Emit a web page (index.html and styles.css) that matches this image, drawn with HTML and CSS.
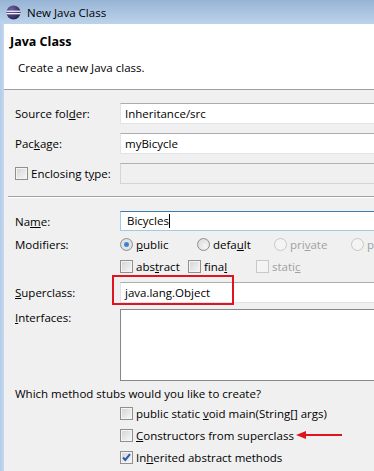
FILE: index.html
```html
<!DOCTYPE html>
<html lang="en">
  <head>
    <meta charset="UTF-8" />
    <title>New Java Class</title>
    <link rel="stylesheet" href="styles.css">
  </head>
  <body>
    <div class="titlebar">
      <svg class="app-icon" width="15" height="15" viewBox="0 0 16 16">
        <defs>
          <radialGradient id="sphere" cx="0.35" cy="0.3" r="0.8">
            <stop offset="0" stop-color="#6d63a8" />
            <stop offset="1" stop-color="#231d4f" />
          </radialGradient>
        </defs>
        <circle cx="8" cy="8" r="7.5" fill="url(#sphere)" />
        <rect x="0.5" y="6" width="15" height="1.3" fill="#fff" />
        <rect x="0.5" y="8.6" width="15" height="1.3" fill="#fff" />
      </svg>
      <span>New Java Class</span>
    </div>

    <div class="window">
      <div class="frame"></div>
      <div class="dialog">
        <div class="banner">
          <div class="banner-title">Java Class</div>
          <div class="banner-desc">Create a new Java class.</div>
        </div>

        <div class="body">
          <div class="row">
            <div class="lbl">Source fol<u>d</u>er:</div>
            <div class="text">Inheritance/src</div>
          </div>
          <div class="row">
            <div class="lbl">Pac<u>k</u>age:</div>
            <div class="text">myBicycle</div>
          </div>
          <div class="row">
            <div class="lbl check-lbl"><span class="box"></span><span>Enclosing t<u>y</u>pe:</span></div>
            <div class="text disabled"></div>
          </div>

          <div class="sep"></div>

          <div class="row row-name">
            <div class="lbl">Na<u>m</u>e:</div>
            <div class="text focused">Bicycles<span class="caret"></span></div>
          </div>
          <div class="row row-mod">
            <div class="lbl">Modifiers:</div>
            <div class="options">
              <span class="opt radio-opt"><span class="radio on"></span><span><u>p</u>ublic</span></span>
              <span class="opt radio-opt"><span class="radio"></span><span>defa<u>u</u>lt</span></span>
              <span class="opt radio-opt off"><span class="radio"></span><span>pri<u>v</u>ate</span></span>
              <span class="opt radio-opt off"><span class="radio"></span><span>p</span></span>
            </div>
          </div>
          <div class="row row-flags">
            <div class="lbl"></div>
            <div class="options">
              <span class="opt check-opt"><span class="box"></span><span>abs<u>t</u>ract</span></span>
              <span class="opt check-opt"><span class="box"></span><span>fina<u>l</u></span></span>
              <span class="opt check-opt off"><span class="box"></span><span>stati<u>c</u></span></span>
            </div>
          </div>
          <div class="row row-super">
            <div class="lbl"><u>S</u>uperclass:</div>
            <div class="text highlight">java.lang.Object<span class="mark"></span></div>
          </div>
          <div class="row row-ifaces">
            <div class="lbl"><u>I</u>nterfaces:</div>
            <div class="list"></div>
          </div>

          <div class="question">Which method stubs would you like to create?</div>
          <div class="stub"><span class="box"></span><span>public static <u>v</u>oid main(String[] args)</span></div>
          <div class="stub">
            <span class="box"></span><span><u>C</u>onstructors from superclass</span>
            <svg class="arrow" width="48" height="10" viewBox="0 0 48 10">
              <path d="M8 4h38v2H8z" fill="#e0141e" />
              <path d="M0 5l10-4v8z" fill="#e0141e" />
            </svg>
          </div>
          <div class="stub"><span class="box checked"></span><span>In<u>h</u>erited abstract methods</span></div>
        </div>
      </div>
    </div>
  </body>
</html>
```

FILE: styles.css
```css
body {
  margin: 0;
  width: 374px;
  height: 471px;
  overflow: hidden;
  font-family: "Open Sans", "Noto Sans", sans-serif;
  font-size: 11.5px;
  color: #000;
  background: #f0f0f0;
}
u {
  text-decoration: underline;
  text-underline-offset: 1px;
}
.titlebar {
  height: 24px;
  display: flex;
  align-items: center;
  padding-left: 6px;
  background: linear-gradient(#98b4d5, #bcd3eb);
  box-sizing: border-box;
}
.app-icon {
  margin-right: 6px;
}
.window {
  display: flex;
  height: 447px;
}
.frame {
  width: 4px;
  flex: none;
  background: linear-gradient(90deg, #b4cce8, #c4d8ee);
}
.dialog {
  width: 420px;
  flex: none;
}
.banner {
  height: 66px;
  background: #fff;
  border-bottom: 1px solid #a0a0a0;
  padding-left: 6px;
  padding-top: 10px;
  box-sizing: border-box;
}
.banner-title {
  font-weight: bold;
  font-size: 12.5px;
  line-height: 16px;
}
.banner-desc {
  margin-top: 10px;
  padding-left: 8px;
  line-height: 16px;
}
.body {
  padding: 8px 0 0 11px;
}
.row {
  display: flex;
  align-items: center;
  height: 30px;
}
.lbl {
  width: 105px;
  flex: none;
  display: flex;
  align-items: center;
  white-space: nowrap;
}
.check-lbl .box {
  margin-right: 3px;
}
.text {
  flex: 1;
  height: 21px;
  box-sizing: border-box;
  border: 1px solid #e2e3ea;
  border-top-color: #abadb3;
  background: #fff;
  padding-left: 4px;
  line-height: 19px;
  position: relative;
}
.text.disabled {
  background: #f0f0f0;
  border-color: #d5d5d5;
  border-top-color: #adb2b5;
}
.text.focused {
  height: 20px;
  line-height: 18px;
  border-color: #a4c9e3;
  border-top-color: #3d7bad;
  padding-left: 6px;
}
.caret {
  display: inline-block;
  width: 1px;
  height: 14px;
  background: #000;
  vertical-align: -3px;
}
.sep {
  margin-top: 8px;
  height: 0;
  border-top: 1px solid #a0a0a0;
  border-bottom: 1px solid #fff;
  margin-left: -7px;
}
.row-name {
  margin-top: 9px;
  height: 28px;
}
.row-mod {
  height: 18px;
}
.row-flags {
  height: 26px;
}
.row-super {
  height: 26px;
}
.options {
  display: flex;
}
.opt {
  display: flex;
  align-items: center;
  white-space: nowrap;
}
.radio-opt {
  width: 77px;
}
.check-opt {
  width: 68px;
}
.opt.off {
  color: #a0a0a0;
}
.radio {
  width: 13px;
  height: 13px;
  box-sizing: border-box;
  border-radius: 50%;
  border: 1px solid #8f8f8f;
  background: radial-gradient(circle at 65% 65%, #f6f6f6, #d4d4d4);
  margin-right: 3px;
  flex: none;
}
.radio.on {
  background: radial-gradient(circle, #2c6bc0 0, #5aa2e6 2.5px, #e6e6e6 3px, #d6d6d6 100%);
}
.off .radio {
  border-color: #c8c8c8;
  background: #f4f4f4;
}
.box {
  display: inline-block;
  width: 13px;
  height: 13px;
  box-sizing: border-box;
  border: 1px solid #8f8f8f;
  background: linear-gradient(135deg, #d3d3d3, #f8f8f8);
  box-shadow: inset 0 0 0 1px #f4f4f4;
  margin-right: 3px;
  flex: none;
}
.off .box {
  border-color: #c8c8c8;
  background: #f4f4f4;
}
.box.checked {
  background:
    url("data:image/svg+xml;utf8,<svg xmlns='http://www.w3.org/2000/svg' width='11' height='11'><path d='M2 5.5l2.3 2.5L9 2.2' fill='none' stroke='%232a5aa8' stroke-width='2'/></svg>") center/11px no-repeat,
    linear-gradient(135deg, #d3d3d3, #f8f8f8);
}
.highlight .mark {
  position: absolute;
  left: -9px;
  top: -8px;
  width: 122px;
  height: 30px;
  box-sizing: border-box;
  border: 2px solid #e0141e;
}
.row-ifaces {
  height: 72px;
  margin-top: 4px;
  align-items: flex-start;
}
.row-ifaces .lbl {
  padding-top: 1px;
  line-height: 16px;
}
.list {
  flex: 1;
  height: 72px;
  box-sizing: border-box;
  border: 1px solid #828790;
  background: #fff;
}
.question {
  margin-top: 5px;
  height: 16px;
  line-height: 16px;
}
.stub {
  margin-left: 105px;
  height: 22px;
  display: flex;
  align-items: center;
  white-space: nowrap;
  position: relative;
}
.arrow {
  position: absolute;
  left: 176px;
  top: 6px;
}
```
